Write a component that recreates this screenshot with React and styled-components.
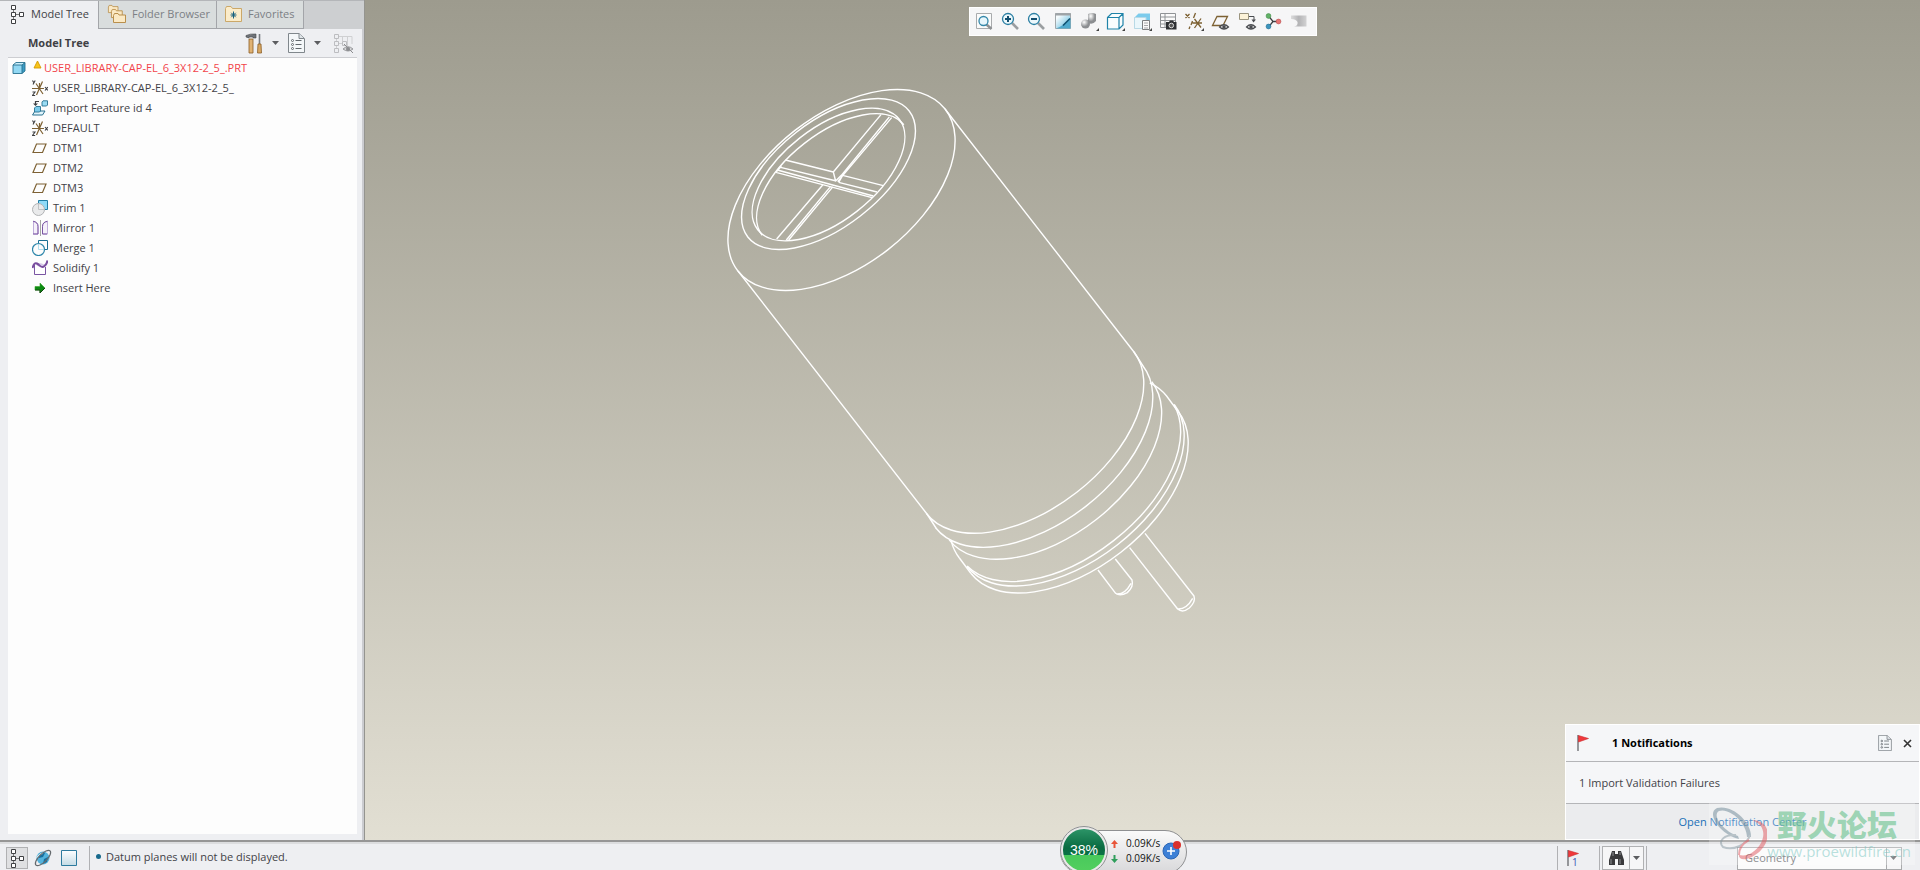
import React from "react";
import styled, { createGlobalStyle } from "styled-components";

const GlobalStyle = createGlobalStyle`
  * { box-sizing: border-box; }
  body { margin: 0; }
  button, select { font: inherit; color: inherit; }
`;

const Page = styled.div`
  height: 100vh;
  display: flex;
  flex-direction: column;
  overflow: hidden;
  position: relative;
  font-family: "Open Sans", "Noto Sans", sans-serif;
  font-size: 11px;
  line-height: 16px;
  color: #424247;
  background: #eeeff2;
`;

const Workspace = styled.main`
  flex: 1;
  min-height: 0;
  display: flex;
`;

/* ---------- side panel ---------- */

const SidePanel = styled.aside`
  width: 365px;
  flex: none;
  display: flex;
  flex-direction: column;
  background: #eeeff2;
  border-right: 1px solid #94948f;
  box-shadow: inset -2px 0 0 #cbccd0;
`;

const TabBar = styled.nav`
  display: flex;
  height: 29px;
  background: #cdcfd1;
  border-top: 1px solid #b4b6b9;
`;

const Tab = styled.button`
  display: flex;
  align-items: center;
  gap: ${(p) => (p.$active ? 7 : 5)}px;
  width: ${(p) => p.$width}px;
  padding: 0 0 2px ${(p) => (p.$active ? 10 : 8)}px;
  border: 0 solid #a3a5a9;
  border-width: ${(p) => (p.$active ? "0 1px 0 0" : "0 1px 1px 0")};
  background: ${(p) => (p.$active ? "#eeeff2" : "#d9dddd")};
  color: ${(p) => (p.$active ? "#424247" : "#7c8085")};
  white-space: nowrap;
`;

const PanelHeader = styled.header`
  display: flex;
  align-items: center;
  height: 28px;
  margin: 0 7px 0 8px;
  padding: 0 0 0 20px;
`;

const PanelTitle = styled.h2`
  flex: 1;
  margin: 0;
  font-size: 11px;
  font-weight: 700;
  color: #3f4145;
`;

const IconButton = styled.button`
  display: flex;
  align-items: center;
  justify-content: center;
  width: ${(p) => p.$width || 20}px;
  height: 22px;
  padding: 0;
  border: 0;
  background: none;
`;

const Tree = styled.ul`
  flex: 1;
  margin: 0 7px 6px 8px;
  padding: 0;
  list-style: none;
  background: #fdfdfd;
  border-top: 1px solid #cdced2;
`;

const TreeRow = styled.li`
  display: flex;
  align-items: center;
  gap: 5px;
  height: 20px;
  padding-left: ${(p) => (p.$root ? 4 : 24)}px;
  color: ${(p) => (p.$root ? "#f2444a" : "inherit")};
  white-space: nowrap;
`;

const StatusMark = styled.span`
  display: flex;
  align-items: center;
  gap: 2px;
  margin-left: 2px;
`;

/* ---------- graphics area ---------- */

const Viewport = styled.section`
  flex: 1;
  min-width: 0;
  position: relative;
  background: linear-gradient(#9d9b8e, #e2dfd3);
`;

const Scene = styled.svg`
  display: block;
  width: 100%;
  height: 100%;
`;

const ViewToolbar = styled.div`
  position: absolute;
  top: 7px;
  left: 50%;
  transform: translateX(-50%);
  display: flex;
  align-items: center;
  width: 348px;
  height: 29px;
  padding: 0 3px 0 1px;
  background: #f6f6f7;
  border: 1px solid #fff;
`;

const ToolButton = styled(IconButton)`
  flex: 1;
`;

/* ---------- notification ---------- */

const Notification = styled.section`
  position: absolute;
  right: 0;
  bottom: 0;
  width: 355px;
  background: #f5f6f8;
  border: 1px solid #fff;
`;

const NoticeHeader = styled.header`
  display: flex;
  align-items: center;
  height: 37px;
  padding: 0 1px 0 10px;
  border-bottom: 1px solid #b4b5b8;
`;

const NoticeTitle = styled.h3`
  flex: 1;
  margin: 0 0 0 22px;
  font-size: 11px;
  font-weight: 700;
  color: #000;
`;

const NoticeBody = styled.p`
  margin: 0;
  padding: 13px;
  height: 42px;
  border-bottom: 1px solid #b4b5b8;
`;

const NoticeFooter = styled.footer`
  height: 35px;
  padding-top: 10px;
  text-align: center;
  background: #ebecee;
`;

const NoticeLink = styled.a`
  color: #1a6fb8;
  text-decoration: none;
`;

/* ---------- status bar ---------- */

const StatusBar = styled.footer`
  flex: none;
  display: flex;
  align-items: center;
  height: 30px;
  padding-top: 4px;
  border-top: 2px solid #969696;
  background: #eeeff2;
  box-shadow: inset 0 2px 0 #dcdddf;
`;

const ToggleGroup = styled.div`
  display: flex;
  gap: 4px;
  padding: 0 9px 0 6px;
`;

const ToggleButton = styled(IconButton)`
  width: 22px;
  border: 1px solid ${(p) => (p.$pressed ? "#b0b1b3" : "transparent")};
  background: ${(p) => (p.$pressed ? "#dfe0e2" : "none")};
`;

const Divider = styled.span`
  width: 1px;
  height: 24px;
  background: #b0b1b4;
`;

const StatusText = styled.p`
  flex: 1;
  display: flex;
  align-items: center;
  gap: 5px;
  margin: 0 0 3px 6px;

  &::before {
    content: "";
    width: 5px;
    height: 5px;
    border-radius: 50%;
    background: #17698c;
  }
`;

const FlagButton = styled(IconButton)`
  width: 41px;
  justify-content: flex-start;
  padding-left: 8px;
`;

const FlagCount = styled.span`
  align-self: flex-end;
  margin-left: -8px;
  font-size: 10px;
  line-height: 14px;
  color: #3d55b5;
`;

const SearchGroup = styled.div`
  display: flex;
  width: 42px;
  height: 24px;
  margin: 0 2px;
  border: 1px solid #b0b1b3;
  background: #f6f6f7;

  button + button { border-left: 1px solid #b0b1b3; }
`;

const FilterBox = styled.label`
  position: relative;
  display: flex;
  width: 165px;
  height: 23px;
  margin: 0 18px 0 90px;

  svg { position: absolute; right: 5px; top: 9px; }
`;

const FilterSelect = styled.select`
  appearance: none;
  width: 100%;
  padding: 0 0 0 7px;
  border: 1px solid #a9aaac;
  border-radius: 0;
  color: #66676b;
  background: linear-gradient(90deg, #a9aaac 1px, #f6f6f7 1px) right / 15px 100% no-repeat #fbfbfb;
`;

/* ---------- network meter ---------- */

const Meter = styled.div`
  position: absolute;
  left: calc(50% + 100px);
  bottom: -4px;
  display: flex;
  align-items: center;
  width: 127px;
  height: 44px;
  padding-left: 50px;
  border: 1px solid #8f9092;
  border-radius: 22px;
  background: linear-gradient(#fafafa, #d8d8da);
  color: #111;
`;

const MeterBall = styled.strong`
  position: absolute;
  left: -1px;
  bottom: -1px;
  display: flex;
  align-items: center;
  justify-content: center;
  width: 48px;
  height: 48px;
  border: 3px solid #e9e9e9;
  outline: 1px solid #8f9092;
  outline-offset: -1px;
  border-radius: 50%;
  background: linear-gradient(#2c9467 0, #0a6b41 45%, #087345 62%, #49c95c 63%, #52cf5e);
  color: #fff;
  font-family: "Liberation Sans", Arial, sans-serif;
  font-size: 14px;
  font-weight: 400;
`;

const Rates = styled.ul`
  margin: 0 0 2px;
  padding: 0;
  list-style: none;
  font-size: 10px;
  line-height: 15px;
`;

const Rate = styled.li`
  display: flex;
  align-items: center;
  gap: 8px;
`;

const MeterAdd = styled(IconButton)`
  width: 20px;
  margin: 0 0 4px 2px;
`;

/* ---------- watermark ---------- */

const Watermark = styled.div`
  position: absolute;
  right: 5px;
  bottom: 5px;
  display: flex;
  width: 206px;
  height: 62px;
  background: rgba(255, 255, 255, 0.25);
  pointer-events: none;
`;

const WatermarkText = styled.div`
  display: flex;
  flex-direction: column;
  align-items: flex-end;
  width: 144px;
  flex: none;
  font-size: 15px;
  line-height: 20px;
  color: rgba(125, 200, 195, 0.55);
  white-space: nowrap;
`;

const WatermarkName = styled.span`
  padding: 2px 14px 0 0;
  font-family: "Noto Sans CJK SC", sans-serif;
  font-size: 30px;
  font-weight: 900;
  line-height: 36px;
  color: rgba(110, 195, 145, 0.65);
`;

/* ---------- icons ---------- */

const Icon = ({ w = 16, h = 16, children }) => (
  <svg width={w} height={h} viewBox={`0 0 ${w} ${h}`} fill="none" aria-hidden="true">
    {children}
  </svg>
);

const Caret = () => (
  <Icon w={7} h={4}>
    <path d="M0 0H7L3.5 4Z" fill="#5c5d60" />
  </Icon>
);

const TreeIcon = () => (
  <Icon w={14} h={20}>
    <path d="M3.5 5V15M4 10.5H9" stroke="#77787a" />
    <path d="M1.5 1.5h4v4h-4zM1.5 8.5h4v4h-4zM1.5 15.5h4v4h-4zM9.5 8.5h4v4h-4z" stroke="#3f4043" fill="#fff" />
  </Icon>
);

const Folder = ({ x, y, s = 1 }) => (
  <path
    transform={`translate(${x} ${y}) scale(${s})`}
    d="M.5 9.5V2.5L1.5.5H5L6 2H12.5V9.5Z"
    fill="#fbe9c4"
    stroke="#b98f4c"
  />
);

const FoldersIcon = () => (
  <Icon w={20} h={20}>
    <Folder x={1} y={1} s={0.8} />
    <Folder x={4} y={5} s={0.9} />
    <Folder x={6} y={9} />
  </Icon>
);

const FavoritesIcon = () => (
  <Icon w={18} h={16}>
    <path d="M.5 15.5V2.5L1.5.5H6L7.5 2.5H16.5V15.5Z" fill="#fbecca" stroke="#cba869" />
    <path d="M8.5 5.5v7M5.5 9h6M6.3 6.8l4.4 4.4M10.7 6.8l-4.4 4.4" stroke="#17617f" />
  </Icon>
);

const ToolsIcon = () => (
  <Icon w={18} h={21}>
    <path d="M1 2.5Q5 .5 11 1V5H8V4H4V5L1 4Z" fill="#6f7378" stroke="#45484c" strokeWidth=".6" />
    <path d="M4 6H8V20H4Z" fill="#e0b273" stroke="#8c5e27" strokeWidth=".8" />
    <path d="M14.5 1V11" stroke="#777b80" strokeWidth="1.6" />
    <path d="M13 11H16L16.5 20H12.5Z" fill="#d9a862" stroke="#8c5e27" strokeWidth=".8" />
  </Icon>
);

const DocIcon = ({ w = 17, h = 20 }) => (
  <svg width={w} height={h} viewBox="0 0 17 20" fill="none" aria-hidden="true">
    <path d="M.5 .5H11L16.5 5.5V19.5H.5Z" fill="#f4f7f9" stroke="#80878c" />
    <path d="M11 .5V5.5H16" fill="#dfe4e8" stroke="#80878c" />
    <path d="M7.5 7.5h6M7.5 11.5h6M7.5 15.5h6" stroke="#63696e" />
    <circle cx="4.5" cy="7.5" r="1" stroke="#63696e" />
    <circle cx="4.5" cy="11.5" r="1" stroke="#63696e" />
    <circle cx="4.5" cy="15.5" r="1" stroke="#63696e" />
  </svg>
);

const HiddenTreeIcon = () => (
  <Icon w={21} h={21}>
    <path d="M3.5 5v11M5 3.5h14M9.5 3.5V8M14.5 3.5V13M19 3.5V11M5 10.5h6" stroke="#cfd0d2" />
    <path d="M1.5 1.5h4v4h-4zM1.5 8.5h4v4h-4zM1.5 15.5h4v4h-4zM9.5 8.5h4v4h-4z" fill="#eeeff2" stroke="#bcbdc0" />
    <path d="M10 16Q15 11.5 20 16Q15 20 10 16Z" fill="#d4d5d7" stroke="#97989b" />
    <circle cx="15" cy="16" r="2" fill="#8b8c8f" />
    <path d="M11 11L20 20" stroke="#8b8c8f" />
  </Icon>
);

const PartIcon = () => (
  <Icon w={14} h={14}>
    <path d="M1 4L4 1.5H13L10 4Z" fill="#c9effc" />
    <path d="M10 4L13 1.5V10L10 12.5Z" fill="#3b9cc4" />
    <path d="M1 4H10V12.5H1Z" fill="#92d8f3" />
    <path d="M1 4L4 1.5H13V10L10 12.5H1ZM1 4H10V12.5M10 4L13 1.5" stroke="#28708f" strokeWidth=".9" />
  </Icon>
);

const WarningIcon = () => (
  <Icon w={9} h={16}>
    <path d="M4.5 1L8 8H1Z" fill="#f8c51c" stroke="#d59a00" strokeWidth=".9" />
  </Icon>
);

const CsysIcon = () => (
  <Icon>
    <path d="M0 8.5H12M4 3.5L11 14M10.5 1.5L4.5 15M7.5 3V8" stroke="#7d6133" strokeWidth="1.2" />
    <path d="M.5.5L1.7 2.5M3.2.5L1 4.5M.5 12H3L.5 15.5H3.2M13 7L15.8 10.5M15.8 7L13 10.5" stroke="#3f4043" strokeWidth="1.1" />
  </Icon>
);

const ImportIcon = () => (
  <Icon>
    <path d="M7 1.5H3.5V4" stroke="#3f4043" strokeWidth="1.2" />
    <path d="M1 3.5H6L3.5 6Z" fill="#3f4043" />
    <path d="M10 2L11 .8H15.5V5L14.5 6H10Z" fill="#9adcf4" stroke="#28708f" strokeWidth=".9" />
    <path d="M.5 15L3 11H13L10.5 15Z" fill="#e2f5fc" stroke="#28708f" />
    <path d="M2.5 8L4 6.5H8.5V11L7.5 12H2.5Z" fill="#7bcbeb" stroke="#28708f" strokeWidth=".9" />
  </Icon>
);

const PlaneIcon = () => (
  <Icon>
    <path d="M1 12.5L4.5 4H14L10.5 12.5Z" stroke="#7d6133" strokeWidth="1.2" />
  </Icon>
);

const TrimIcon = () => (
  <Icon>
    <path d="M6.5.5H15.5V9.5H6.5Z" fill="#8edaf8" stroke="#1f7ea6" />
    <circle cx="6.5" cy="9.5" r="6" fill="#e9eaeb" stroke="#b0b2b4" />
    <path d="M6.5 3.5V9.5H12.5" stroke="#c0c2c4" />
  </Icon>
);

const MirrorIcon = () => (
  <Icon>
    <path d="M1.5 1.5V14H6V6Q6 2.5 1.5 1.5M15.5 1.5V14H10.5V6Q10.5 2.5 15.5 1.5" fill="#f5f0fa" stroke="#c0addb" />
    <path d="M1 1.2Q6 2 6 6.5V14H1M15.5 1.2Q10.5 2 10.5 6.5V14H15" stroke="#7a55a3" />
    <path d="M8.5 0V16" stroke="#a5a5a5" />
  </Icon>
);

const MergeIcon = () => (
  <Icon>
    <path d="M6.5 3V.5H15.5V9.5H12.5" stroke="#1b6f93" />
    <circle cx="6.5" cy="9.5" r="6" stroke="#2d86aa" strokeWidth="1.2" />
    <path d="M6.5 4V9.5H12" stroke="#b5dfee" />
  </Icon>
);

const SolidifyIcon = () => (
  <Icon>
    <path d="M2.5 5V14.5H13.5V7" stroke="#7a55a3" fill="#fff" />
    <path d="M3.5 4.5Q7 1.5 13 5L11 7Q8 8 3.5 4.5" fill="#d8cbe9" />
    <path d="M.5 8Q2 2 5 3.5C8 5 9 9 12.5 6Q15 4 15.5.5" stroke="#7a4f9f" strokeWidth="2" />
  </Icon>
);

const InsertIcon = () => (
  <Icon>
    <path d="M3 6.5H8V3L13 8L8 13V10H3Z" fill="#0b8a12" stroke="#3aa52c" strokeWidth=".6" />
    <path d="M3 10H8V13L13 8" stroke="#11470f" />
  </Icon>
);

const FlagIcon = () => (
  <Icon w={14} h={18}>
    <path d="M2 1V17" stroke="#6f7175" strokeWidth="1.4" />
    <path d="M2.5 1.5L12.5 4.5L2.5 8Z" fill="#f0383b" stroke="#c9282b" strokeWidth=".6" />
  </Icon>
);

const GlobeIcon = () => (
  <Icon w={18} h={18}>
    <circle cx="9" cy="9" r="6.5" fill="#53b2dc" />
    <path d="M5 5Q8 2 11 4L9 8L5 9L4 7ZM10 10L14 8L13 13L9 15Z" fill="#176f9e" />
    <path d="M3 9Q5 5 9 4" stroke="#d5f2fd" strokeWidth="1.5" />
    <ellipse cx="9" cy="9" rx="10" ry="4" transform="rotate(-45 9 9)" stroke="#656a6e" strokeWidth="1.2" />
  </Icon>
);

const PaneIcon = () => (
  <Icon w={18} h={18}>
    <defs>
      <linearGradient id="pane" x1="0" y1="0" x2="0" y2="1">
        <stop stopColor="#fdfeff" />
        <stop offset="1" stopColor="#c4dbe5" />
      </linearGradient>
    </defs>
    <path d="M1.5 1.5H16.5V16.5H1.5Z" fill="url(#pane)" stroke="#2d7a9e" />
  </Icon>
);

const BinocularsIcon = () => (
  <Icon w={17} h={16}>
    <path d="M4 1H7V4H10V1H13L16 10V15H10V9H7V15H1V10Z" fill="#3a3a3c" />
    <path d="M3 9V14M12 9V14M5 2V6M12 2V5" stroke="#8f9194" />
  </Icon>
);

const Corner = () => <path d="M23 16V19H20Z" fill="#444" />;

const Eye = ({ x, y }) => (
  <g transform={`translate(${x} ${y})`}>
    <path d="M-4.5 0Q0-4.5 4.5 0Q0 4 -4.5 0Z" fill="#fff" stroke="#4a4c50" strokeWidth="1.2" />
    <circle r="1.8" fill="#4a4c50" />
  </g>
);

const viewTools = [
  ["Refit", <>
    <path d="M5.5 1.5H20.5V16.5H5.5Z" fill="#fafbfb" stroke="#a9abad" />
    <path d="M15.5 12.5L20.5 17" stroke="#8e9194" strokeWidth="2.5" />
    <circle cx="12.5" cy="9" r="4.5" fill="#e7f6fc" stroke="#3487a9" strokeWidth="1.3" />
  </>],
  ["Zoom in", <>
    <path d="M15 11L21 17" stroke="#9b9ea1" strokeWidth="2.6" />
    <circle cx="11" cy="7" r="5.5" fill="#edf8fc" stroke="#2b7fa3" strokeWidth="1.3" />
    <path d="M8 7H14M11 4V10" stroke="#124f70" strokeWidth="2" />
  </>],
  ["Zoom out", <>
    <path d="M15 11L21 17" stroke="#9b9ea1" strokeWidth="2.6" />
    <circle cx="11" cy="7" r="5.5" fill="#edf8fc" stroke="#2b7fa3" strokeWidth="1.3" />
    <path d="M8 7H14" stroke="#124f70" strokeWidth="2" />
  </>],
  ["Repaint", <>
    <defs>
      <linearGradient id="repaint" x1="0" y1="0" x2="1" y2="1">
        <stop offset=".2" stopColor="#f5fbfd" />
        <stop offset=".8" stopColor="#7cc6e2" />
      </linearGradient>
    </defs>
    <path d="M5.5 1.5H20.5V16.5H5.5Z" fill="url(#repaint)" stroke="#a2a8ab" />
    <path d="M6 16.5Q12 15 20.5 6V16.5Z" fill="#4fa9cc" />
    <path d="M5 2.5H21" stroke="#9ea3a6" strokeWidth="2" />
    <path d="M13 13.5L20 6.5" stroke="#10516f" strokeWidth="1.6" />
  </>],
  ["Display style", <>
    <defs>
      <radialGradient id="shade" cx=".35" cy=".3">
        <stop stopColor="#fff" />
        <stop offset="1" stopColor="#8c8e91" />
      </radialGradient>
    </defs>
    <path d="M12 2Q16 0 20 2V9Q17 13 12 11Z" fill="url(#shade)" />
    <circle cx="9.5" cy="12" r="4.5" fill="url(#shade)" />
    <Corner />
  </>],
  ["Saved orientations", <>
    <path d="M5.5 5.5L9.5 1.5H21V13L17 17H5.5ZM5.5 5.5H17V17M17 5.5L21 1.5" fill="#f9fdfe" stroke="#1f83a8" strokeWidth="1.2" />
    <Corner />
  </>],
  ["View manager", <>
    <path d="M5.5 5.5L9.5 1.5H21V13L17 16.5H5.5Z" fill="#7ccbec" />
    <path d="M5.5 5.5H17V16.5H5.5Z" fill="#eaf6fb" stroke="#b8d9e6" />
    <path d="M13.5 8.5H20.5V17.5H13.5Z" fill="#fafafa" stroke="#7b7e81" />
    <path d="M15 11h4M15 13.5h4M15 16h4" stroke="#a5a7aa" />
    <Corner />
  </>],
  ["Snapshot", <>
    <path d="M5.5 1.5H20.5V15.5H5.5ZM5.5 5H20M5.5 8.5H20M5.5 12H20M10 1.5V15.5" fill="#fbfbfb" stroke="#909396" />
    <path d="M11 10H14L15 8.5H18L19 10H21.5V17.5H11Z" fill="#2e3033" />
    <circle cx="16.3" cy="13.5" r="2.3" fill="#555" stroke="#ddd" />
  </>],
  ["Datum display", <>
    <path d="M4.5 2L8.5 6M8.5 2L4.5 6M14.5 1L12.5 6M11.5 9L10 13M9 14.5L8 17M11.5 11H21M13.5 7L20 15.5M20 6.5L13.5 16" stroke="#7d6133" strokeWidth="1.3" />
    <Corner />
  </>],
  ["Plane display", <>
    <path d="M5.5 13.5L10 4.5H20.5L16 13.5Z" stroke="#7d6133" strokeWidth="1.3" />
    <Eye x={17} y={15} />
  </>],
  ["Annotation display", <>
    <path d="M5.5 1.5H14.5V7.5H5.5Z" fill="#fdf3d9" stroke="#9b947f" />
    <path d="M15 4.5H20V8" stroke="#4a4c50" />
    <path d="M17.5 7.5H22L19.5 10.5Z" fill="#4a4c50" />
    <Eye x={17} y={15} />
  </>],
  ["Spin center", <>
    <path d="M8.5 4L13 9.5H18.5M13 9.5L8.5 15" stroke="#3c3e41" strokeWidth="1.3" />
    <circle cx="8.5" cy="4" r="2.4" fill="#62b267" stroke="#3f8c46" strokeWidth=".6" />
    <circle cx="18.5" cy="9.5" r="2.4" fill="#e87272" stroke="#b64c4c" strokeWidth=".6" />
    <circle cx="8.5" cy="14.5" r="2.4" fill="#3c94bd" stroke="#1d6b91" strokeWidth=".6" />
  </>],
  ["Clipping", <>
    <defs>
      <linearGradient id="clip">
        <stop stopColor="#dcdcdd" />
        <stop offset=".5" stopColor="#b4b4b6" />
        <stop offset="1" stopColor="#d2d2d3" />
      </linearGradient>
    </defs>
    <path d="M5 3.5H20.5V14.5H8Q12 14 11.5 10Q10 7 5 7Z" fill="url(#clip)" />
  </>],
];

/* ---------- model wireframe ---------- */

const TILT = -38;
const RAD = Math.PI / 180;

// Path of the part of a tilted ellipse between two parameter angles, in degrees.
const arc = (cx, cy, a, b, from, to) => {
  const at = (deg) => {
    const x = a * Math.cos(deg * RAD);
    const y = b * Math.sin(deg * RAD);
    const c = Math.cos(TILT * RAD);
    const s = Math.sin(TILT * RAD);
    return `${(cx + x * c - y * s).toFixed(1)} ${(cy + x * s + y * c).toFixed(1)}`;
  };
  return `M${at(from)}A${a} ${b} ${TILT} ${to - from > 180 ? 1 : 0} 1 ${at(to)}`;
};

const Ring = ({ cx, cy, a, b }) => (
  <ellipse rx={a} ry={b} transform={`translate(${cx} ${cy}) rotate(${TILT})`} />
);

const CapacitorModel = () => (
  <Scene viewBox="365 0 1555 840" role="img" aria-label="Capacitor wireframe">
    <g fill="none" stroke="#fff" strokeWidth="1.4" strokeLinejoin="round">
      <Ring cx={841.5} cy={190} a={131.5} b={75.6} />
      <Ring cx={828.5} cy={174} a={102.4} b={52.7} />
      <Ring cx={828.5} cy={174.5} a={89.8} b={46.5} />
      <path d={arc(833, 180, 89.8, 46.5, 180, 360)} />
      <path d="M945 109L1134 352L1143 366M738 271L927 514L936 528" />
      <path d={arc(1030.2, 432.8, 131.5, 75.6, 0, 180)} />
      <path d={arc(1039.2, 446.8, 131.5, 75.6, 0, 180)} />
      <path d={arc(1050.5, 460.8, 128.5, 74.5, 0, 180)} />
      <path d={arc(1067.2, 481.2, 131.5, 75.6, 4, 176)} />
      <path d={arc(1070.6, 485.5, 131.5, 75.6, 0, 180)} />
      <path d={arc(1074.6, 492.5, 131.5, 75.6, 0, 180)} />
      <path d={arc(1063, 477, 131.5, 75.6, -16, 0) + "L1178 411.5"} />
      <path d={arc(1063, 477, 131.5, 75.6, 180, 194)} />
      <path d="M959.4 558L971 573.5" />
      <g transform="translate(700 70) scale(.3333)" strokeWidth="4.2">
        <path d="M543 134L400 306L407 333L424 316M400 306L256 270M242 292L409 333M232 300L520 378M228 307L516 383M228 307L244 288M428 316L550 347M416 337L531 366M428 316L416 337M568 141L424 316M575 143L413 335M370 343L230 507M392 349L259 510M399 350L266 510" />
      </g>
      <g transform="translate(900 330) scale(.3333)" strokeWidth="4.2">
        <path d="M594 720L647 790Q660 800 682 788Q702 770 696 750L646 687M649 792Q675 794 693 760" />
        <path d="M689 653L833 837Q848 850 868 834Q888 815 882 798L735 610M833 837Q860 838 878 805" />
      </g>
    </g>
  </Scene>
);

/* ---------- page ---------- */

const features = [
  [CsysIcon, "USER_LIBRARY-CAP-EL_6_3X12-2_5_"],
  [ImportIcon, "Import Feature id 4"],
  [CsysIcon, "DEFAULT"],
  [PlaneIcon, "DTM1"],
  [PlaneIcon, "DTM2"],
  [PlaneIcon, "DTM3"],
  [TrimIcon, "Trim 1"],
  [MirrorIcon, "Mirror 1"],
  [MergeIcon, "Merge 1"],
  [SolidifyIcon, "Solidify 1"],
  [InsertIcon, "Insert Here"],
];

const RateArrow = ({ down }) => (
  <Icon w={7} h={8}>
    {down ? (
      <path d="M2.5 0H4.5V4H7L3.5 8L0 4H2.5Z" fill="#2f9e5b" />
    ) : (
      <path d="M2.5 8H4.5V4H7L3.5 0L0 4H2.5Z" fill="#e8553a" />
    )}
  </Icon>
);

export default function App() {
  return (
    <Page>
      <GlobalStyle />
      <Workspace>
        <SidePanel>
          <TabBar>
            <Tab $active $width={99}><TreeIcon />Model Tree</Tab>
            <Tab $width={118}><FoldersIcon />Folder Browser</Tab>
            <Tab $width={87}><FavoritesIcon />Favorites</Tab>
          </TabBar>
          <PanelHeader>
            <PanelTitle>Model Tree</PanelTitle>
            <IconButton $width={18} aria-label="Settings"><ToolsIcon /></IconButton>
            <IconButton $width={24} aria-label="Settings menu"><Caret /></IconButton>
            <IconButton $width={18} aria-label="Show"><DocIcon /></IconButton>
            <IconButton $width={24} aria-label="Show menu"><Caret /></IconButton>
            <IconButton $width={28} aria-label="Hide tree items"><HiddenTreeIcon /></IconButton>
          </PanelHeader>
          <Tree>
            <TreeRow $root>
              <PartIcon />
              <StatusMark>
                <WarningIcon />
                USER_LIBRARY-CAP-EL_6_3X12-2_5_.PRT
              </StatusMark>
            </TreeRow>
            {features.map(([FeatureIcon, name]) => (
              <TreeRow key={name}>
                <FeatureIcon />
                {name}
              </TreeRow>
            ))}
          </Tree>
        </SidePanel>

        <Viewport>
          <CapacitorModel />
          <ViewToolbar role="toolbar">
            {viewTools.map(([label, drawing]) => (
              <ToolButton key={label} aria-label={label}>
                <Icon w={26} h={20}>{drawing}</Icon>
              </ToolButton>
            ))}
          </ViewToolbar>
          <Notification>
            <NoticeHeader>
              <FlagIcon />
              <NoticeTitle>1 Notifications</NoticeTitle>
              <IconButton $width={22} aria-label="Details"><DocIcon w={14} h={16} /></IconButton>
              <IconButton $width={22} aria-label="Close">
                <Icon w={9} h={9}>
                  <path d="M1 1L8 8M8 1L1 8" stroke="#333" strokeWidth="1.6" />
                </Icon>
              </IconButton>
            </NoticeHeader>
            <NoticeBody>1 Import Validation Failures</NoticeBody>
            <NoticeFooter>
              <NoticeLink href="#notifications">Open Notification Center</NoticeLink>
            </NoticeFooter>
          </Notification>
        </Viewport>
      </Workspace>

      <StatusBar>
        <ToggleGroup>
          <ToggleButton $pressed aria-label="Model tree"><TreeIcon /></ToggleButton>
          <ToggleButton aria-label="Browser"><GlobeIcon /></ToggleButton>
          <ToggleButton aria-label="Full screen"><PaneIcon /></ToggleButton>
        </ToggleGroup>
        <Divider />
        <StatusText>Datum planes will not be displayed.</StatusText>
        <Divider />
        <FlagButton aria-label="Notifications">
          <FlagIcon />
          <FlagCount>1</FlagCount>
        </FlagButton>
        <Divider />
        <SearchGroup>
          <IconButton $width={26} aria-label="Find"><BinocularsIcon /></IconButton>
          <IconButton $width={14} aria-label="Find menu"><Caret /></IconButton>
        </SearchGroup>
        <Divider />
        <FilterBox>
          <FilterSelect aria-label="Selection filter" defaultValue="Geometry">
            <option>Geometry</option>
          </FilterSelect>
          <Caret />
        </FilterBox>
      </StatusBar>

      <Meter>
        <MeterBall>38%</MeterBall>
        <Rates>
          <Rate><RateArrow />0.09K/s</Rate>
          <Rate><RateArrow down />0.09K/s</Rate>
        </Rates>
        <MeterAdd aria-label="Boost">
          <Icon w={20} h={20}>
            <circle cx="9" cy="11" r="8" fill="#3d80d6" stroke="#2c67b5" />
            <path d="M9 7V15M5 11H13" stroke="#fff" strokeWidth="1.6" />
            <circle cx="15" cy="5" r="4" fill="#d9302c" />
          </Icon>
        </MeterAdd>
      </Meter>

      <Watermark>
        <Icon w={58} h={62}>
          <g opacity=".5">
            <path d="M42 34C43 20 24 1 8 5C-3 10 10 31 30 36L29 33C16 29 2 13 10 8C20 4 38 20 38 34Z" fill="#6d8796" />
            <path d="M41 32C38 42 24 48 14 44C8 38 16 31 27 32" stroke="#8496a0" strokeWidth="2" />
            <path d="M43 17C65 18 62 42 46 52C36 59 29 56 30 52C38 54 46 50 52 40C57 30 54 21 43 17Z" fill="#e0555c" />
            <path d="M30 52C30 44 34 40 40 37" stroke="#e0555c" strokeWidth="2" />
          </g>
        </Icon>
        <WatermarkText>
          <WatermarkName lang="zh">野火论坛</WatermarkName>
          www.proewildfire.cn
        </WatermarkText>
      </Watermark>
    </Page>
  );
}
